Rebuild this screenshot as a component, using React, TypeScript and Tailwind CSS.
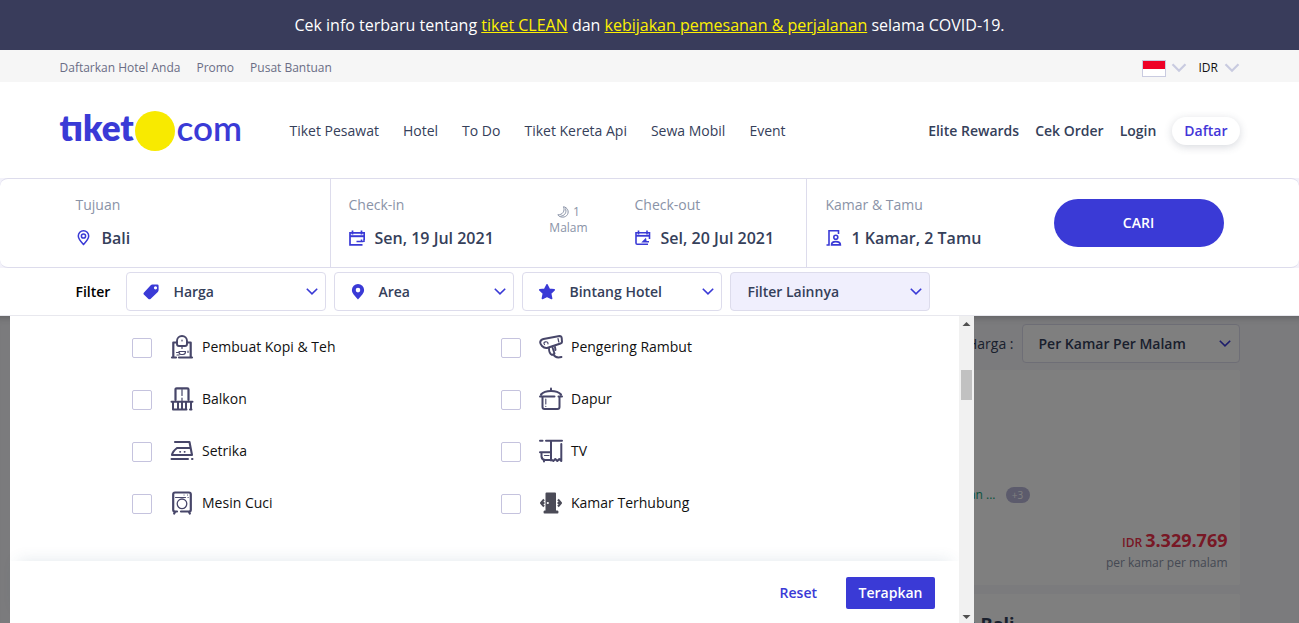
import React, { useState } from "react";

type IconProps = { className?: string };

const Chevron = ({ className }: IconProps) => (
  <svg viewBox="0 0 12 8" className={className} fill="none" stroke="currentColor" strokeWidth="1.6" aria-hidden="true">
    <path d="M0.800 0.800 6 5.900 11.200 0.800" />
  </svg>
);

const WideChevron = () => (
  <svg viewBox="0 0 16 10" className="h-[10px] w-4 shrink-0 text-[#c9cbe0]" fill="none" stroke="currentColor" strokeWidth="2.200" aria-hidden="true">
    <path d="M1.500 1.200 8 7.800 14.500 1.200" />
  </svg>
);

const PinOutline = () => (
  <svg viewBox="0 0 16 16" className="size-4 shrink-0" fill="none" stroke="currentColor" strokeWidth="1.500" aria-hidden="true">
    <path d="M7.500 14.500C5 11.800 2.300 9 2.300 6a5.200 5.200 0 0 1 10.400 0C12.700 9 10 11.800 7.500 14.500Z" />
    <circle cx="7.500" cy="6" r="2.100" />
  </svg>
);

const CalendarIn = () => (
  <svg viewBox="0 0 16 16" className="size-4 shrink-0" fill="none" stroke="currentColor" strokeWidth="1.700" aria-hidden="true">
    <path d="M13.500 14.800H1V2.800h14.200V10M3.500 0.600v3.800M12.500 0.600v3.800" />
    <path d="M1 6.200h14" strokeWidth="2" />
    <path d="M7.500 11.600h6.800M12.500 9.600V12M15 9.500v2.500" strokeWidth="1.500" />
  </svg>
);

const CalendarOut = () => (
  <svg viewBox="0 0 16 16" className="size-4 shrink-0" fill="none" stroke="currentColor" strokeWidth="1.600" aria-hidden="true">
    <path d="M13 14.300H2.200Q1 14.300 1 13V2.800h13.500V9M3.500 0.600v3.800M12 0.600v3.800" />
    <path d="M1 5.800h13.500" strokeWidth="1.800" />
    <path d="M14 11.800H8M10.500 9.200 8 11.800h3z" strokeWidth="1.500" />
  </svg>
);

const RoomGuest = () => (
  <svg viewBox="0 0 16 16" className="size-4 shrink-0" fill="none" stroke="currentColor" strokeWidth="1.600" aria-hidden="true">
    <path d="M0.500 15h2.500V0.800h9.500V4" />
    <circle cx="9.800" cy="7.300" r="2" />
    <path d="M5.500 14.900c0-2.400 1.600-3.300 4.200-3.300s4.700 0.900 4.700 3.300z" />
  </svg>
);

const Moon = () => (
  <svg viewBox="0 0 12 12" className="size-3 shrink-0" fill="none" stroke="currentColor" strokeWidth="1" aria-hidden="true">
    <path d="M6.500 0.700C8.300 5 5.500 9 0.800 8.800 3 12 8.500 12 10.500 8.500 12.200 5.200 10.500 1.500 6.500 0.700Z" />
    <path d="M8.500 2.500c1.500 4-1 7.500-5 7.700" />
  </svg>
);

const Tag = () => (
  <svg viewBox="0 0 16 16" className="size-4 shrink-0" fill="currentColor" aria-hidden="true">
    <path fillRule="evenodd" d="M9.300 0.500H14.300Q15.600 0.500 15.600 1.800V6Q15.600 7.200 14.800 8L7.500 14.900Q6.300 15.700 5.200 14.700L0.800 10.600Q0 9.600 0.800 8.700L7.700 1.300Q8.400 0.500 9.300 0.500ZM12.500 2.200a1.600 1.600 0 1 0 0 3.200a1.600 1.600 0 1 0 0-3.200Z" />
  </svg>
);

const PinSolid = () => (
  <svg viewBox="0 0 16 16" className="size-4 shrink-0" fill="currentColor" aria-hidden="true">
    <path fillRule="evenodd" d="M8 0a6.100 6.100 0 0 1 6.100 6.100C14.100 9.500 11 12.200 8 15.500 5 12.200 1.900 9.500 1.900 6.100A6.100 6.100 0 0 1 8 0ZM8 3.800a2.300 2.300 0 1 0 0 4.600A2.300 2.300 0 1 0 8 3.800Z" />
  </svg>
);

const Star = () => (
  <svg viewBox="0 0 16 16" className="size-4 shrink-0" fill="currentColor" stroke="currentColor" strokeWidth="1.600" strokeLinejoin="round" aria-hidden="true">
    <path d="M8 0.800 10.200 5.200 15.200 5.900 11.600 9.300 12.600 14.500 8 12.200 3.400 14.500 4.400 9.300 0.800 5.900 5.800 5.200Z" />
  </svg>
);

const Facility = ({ children }: { children: React.ReactNode }) => (
  <svg viewBox="0 0 24 24" className="size-6 shrink-0" fill="none" stroke="#474669" strokeWidth="2" strokeLinecap="round" strokeLinejoin="round" aria-hidden="true">
    {children}
  </svg>
);

const facilities = [
  {
    name: "Pembuat Kopi & Teh",
    icon: (
      <Facility>
        <path d="M2 22.500h4M9 22.500h13M3.300 22V7.500h3.500M20.700 22V7.500h-3.500" strokeWidth="2.200" />
        <path d="M7 9V6a5 5 0 0 1 10 0V9q0 2-2 2H9Q7 11 7 9Z" strokeWidth="1.900" />
        <path d="M12 5v1M12 11.500v2" strokeWidth="1.200" />
        <path d="M9 16.500h6.500q0 3-2.500 3h-2q-2 0-2-3ZM9 17.500H6.500M18 16v1.500M7 20h2" strokeWidth="1.200" />
      </Facility>
    ),
  },
  {
    name: "Pengering Rambut",
    icon: (
      <Facility>
        <path d="M4.500 4 20.500 1Q22.500 1 22.700 3L23 7Q23 8 21.500 8.500L8 13Q5.500 13.500 3 11 1 9 1.200 7 1.800 4.500 4.500 4Z" strokeWidth="2" />
        <path d="M19 3.500l0.800 3.500M5.500 9.500q-1.500-2 1-2.700 2.500-0.300 2.500 2" strokeWidth="1.200" />
        <path d="M10 13.500c0 3 1 5.500 3 6.500l2.500-1.500L13.500 12.500M16 12l0.500 3M14.500 19.500c1.200 2.500 3 3.800 8 2.500" strokeWidth="1.900" />
      </Facility>
    ),
  },
  {
    name: "Balkon",
    icon: (
      <Facility>
        <path d="M5.500 13V2.500Q5.500 1.300 6.700 1.300h10.600Q18.500 1.300 18.500 2.500V13" strokeWidth="2.200" />
        <path d="M12 2.500v6M12 11v2.500" strokeWidth="1.200" />
        <path d="M1.500 14.800h21M3 15v7M8 15v7M12 15v7M16 15v7M21 15v7M3 22.500h13.500M20 22.500h1.500" strokeWidth="2" />
      </Facility>
    ),
  },
  {
    name: "Dapur",
    icon: (
      <Facility>
        <path d="M1 9.500h14.500M19.500 9.500H23M3.500 10v10Q3.500 22 5.500 22h13q2 0 2-2V10M2 7.500Q5 4 12 4t10 3.500" strokeWidth="2" />
        <path d="M12 1.500V4" strokeWidth="2" />
        <path d="M6.800 12v5M6.800 19.300v0.200" strokeWidth="1.100" />
      </Facility>
    ),
  },
  {
    name: "Setrika",
    icon: (
      <Facility>
        <path d="M5 3h14.500l2.500 13H2q0.500-3.500 5-7h13" strokeWidth="2.100" />
        <path d="M10 12.800h0.300M14.500 12.800h0.300" strokeWidth="1.700" />
        <path d="M1.500 20h16.500M22 20h0.500" strokeWidth="2" />
      </Facility>
    ),
  },
  {
    name: "TV",
    icon: (
      <Facility>
        <path d="M1 1.800h2.500M7 1.800H23M12 2.500V21.500M22.300 5v17l-2-2-2 2-2-2-2 2-2-1.500" strokeWidth="2" />
        <path d="M1 13.300h10.500M2.500 14v3.500Q3 21 6 21h6M5 21.500v1" strokeWidth="2" />
        <path d="M5.500 16.500h4.500" strokeWidth="1.200" />
      </Facility>
    ),
  },
  {
    name: "Mesin Cuci",
    icon: (
      <Facility>
        <path d="M7 20.500H5q-1.800 0-1.800-1.800V3.300Q3.200 1.500 5 1.500h14q1.800 0 1.800 1.800v15.400q0 1.800-1.800 1.800H11M5 21l-0.800 1.500M19 21l0.800 1.500" strokeWidth="2.200" />
        <circle cx="12" cy="12.800" r="4.800" strokeWidth="1.300" />
        <path d="M5.500 6.500h10M14 4h0.100M17.500 4h0.100M18 6.500h0.200" strokeWidth="1.100" />
      </Facility>
    ),
  },
  {
    name: "Kamar Terhubung",
    icon: (
      <Facility>
        <g stroke="none" fill="#4b4b57">
          <path d="M6.500 2.500Q6.500 1.500 7.500 1.500h8.500q1 0 1 1V19.500h1.500q1 0 1 1.500t-1 1.500H5.500q-1 0-1-1.500t1-1.500h1Z" />
          <circle cx="8.800" cy="12" r="1.100" fill="#fff" />
        </g>
        <path d="M5.500 12H2.500M5 8.500 2 12l3 3.500M18.500 12h3M19 8.500 22 12l-3 3.500" stroke="#4b4b57" strokeWidth="2" strokeLinecap="butt" />
      </Facility>
    ),
  },
];

const Logo = () => (
  <a href="#" className="flex h-10 items-center font-['Lato',sans-serif] text-[35px] leading-10 text-[#3a3ad6]">
    <span className="w-[75px] pb-2 font-extrabold">tıket</span>
    <span className="size-10 shrink-0 rounded-full bg-[#f8ea00]" />
    <span className="w-[68px] pb-2 pl-[2px] font-semibold">com</span>
  </a>
);

function TopArea() {
  const [currency, setCurrency] = useState("IDR");
  return (
    <header className="shrink-0">
      <p className="bg-[#393c5b] px-4 py-[13px] text-center text-base leading-6 text-white">
        Cek info terbaru tentang{" "}
        <a href="#" className="text-[#fdf002] underline">tiket CLEAN</a> dan{" "}
        <a href="#" className="text-[#fdf002] underline">kebijakan pemesanan &amp; perjalanan</a> selama COVID-19.
      </p>
      <div className="bg-[#f6f6f6]">
        <div className="mx-auto flex h-8 max-w-[1180px] items-center justify-between pt-1 text-xs">
          <nav className="flex gap-4 text-[#6a6d85]">
            <a href="#">Daftarkan Hotel Anda</a>
            <a href="#">Promo</a>
            <a href="#">Pusat Bantuan</a>
          </nav>
          <div className="flex items-center gap-3">
            <button aria-label="Bahasa Indonesia" className="flex items-center gap-[5px]">
              <span className="h-[17px] w-6 border border-[#c9cbe0] bg-white">
                <span className="block h-2 bg-[#ee0128]" />
              </span>
              <WideChevron />
            </button>
            <label className="flex items-center gap-1">
              <select
                aria-label="Mata uang"
                value={currency}
                onChange={(e) => setCurrency(e.target.value)}
                className="w-[21px] appearance-none bg-transparent text-[#111]"
              >
                <option>IDR</option>
                <option>USD</option>
              </select>
              <WideChevron />
            </label>
          </div>
        </div>
      </div>
      <div className="mx-auto flex h-24 max-w-[1180px] items-center justify-between pt-[2px] text-sm text-[#35405a]">
        <div className="flex items-center gap-[47px]">
          <Logo />
          <nav className="flex gap-6">
            <a href="#">Tiket Pesawat</a>
            <a href="#">Hotel</a>
            <a href="#">To Do</a>
            <a href="#">Tiket Kereta Api</a>
            <a href="#">Sewa Mobil</a>
            <a href="#">Event</a>
          </nav>
        </div>
        <nav className="flex items-center gap-4 font-semibold">
          <a href="#">Elite Rewards</a>
          <a href="#">Cek Order</a>
          <a href="#">Login</a>
          <a href="#" className="rounded-full bg-white px-3 py-1 text-[#4335d8] shadow-[0_2px_8px_rgba(53,64,90,0.2)]">Daftar</a>
        </nav>
      </div>
    </header>
  );
}

const fieldLabel = "block text-sm leading-5 text-[#8a93a7]";
const fieldValue = "mt-[11px] flex items-center gap-[10px] text-base leading-6 font-semibold text-[#35405a]";

function SearchBar() {
  const [city, setCity] = useState("Bali");
  return (
    <form className="shrink-0 bg-[#f3f2fa]" onSubmit={(e) => e.preventDefault()}>
      <div className="rounded-lg border-t border-b border-[#dddcec] bg-white">
        <div className="mx-auto flex h-[88px] max-w-[1180px]">
          <div className="w-[271px] border-r border-[#dddcec] px-4 pt-4">
            <label htmlFor="city" className={fieldLabel}>Tujuan</label>
            <div className={fieldValue}>
              <span className="text-[#3a3ad6]"><PinOutline /></span>
              <input id="city" value={city} onChange={(e) => setCity(e.target.value)} className="min-w-0 flex-1 bg-transparent outline-none" />
            </div>
          </div>
          <div className="flex w-[476px] border-r border-[#dddcec] pl-[18px]">
            <div className="w-[200px] pt-4">
              <span className={fieldLabel}>Check-in</span>
              <button type="button" className={fieldValue}>
                <span className="text-[#3a3ad6]"><CalendarIn /></span>Sen, 19 Jul 2021
              </button>
            </div>
            <div className="flex w-[40px] flex-col items-center pt-[25px] text-xs leading-4 text-[#8a93a7]">
              <span className="flex items-center gap-1"><Moon />1</span>
              <span>Malam</span>
            </div>
            <div className="pt-4 pl-[46px]">
              <span className={fieldLabel}>Check-out</span>
              <button type="button" className={fieldValue}>
                <span className="text-[#3a3ad6]"><CalendarOut /></span>Sel, 20 Jul 2021
              </button>
            </div>
          </div>
          <div className="flex flex-1 items-center justify-between pr-4 pl-[19px]">
            <div className="self-start pt-4">
              <span className={fieldLabel}>Kamar &amp; Tamu</span>
              <button type="button" className={fieldValue}>
                <span className="text-[#3a3ad6]"><RoomGuest /></span>1 Kamar, 2 Tamu
              </button>
            </div>
            <button type="submit" className="h-12 w-[170px] rounded-full bg-[#3a3ad6] text-sm font-semibold text-white">CARI</button>
          </div>
        </div>
      </div>
    </form>
  );
}

const filterButton = "flex h-[39px] items-center rounded border border-[#dddcec] pr-[7px] pl-4 text-[#35405a]";
const filterChevron = "ml-auto h-2 w-3 text-[#3a3ad6]";

function FilterBar({ open, onToggle }: { open: boolean; onToggle: () => void }) {
  return (
    <div className="shrink-0 border-b border-[#e8e8ee] bg-white">
      <div className="mx-auto flex h-[47px] max-w-[1180px] items-center gap-2 pl-4 text-sm font-semibold">
        <span className="mr-2 text-black">Filter</span>
        <button className={`${filterButton} w-[200px] gap-[14px]`}>
          <span className="text-[#3a3ad6]"><Tag /></span>Harga<Chevron className={filterChevron} />
        </button>
        <button className={`${filterButton} w-[180px] gap-3`}>
          <span className="-ml-px text-[#3a3ad6]"><PinSolid /></span>Area<Chevron className={filterChevron} />
        </button>
        <button className={`${filterButton} w-[200px] gap-[14px]`}>
          <span className="text-[#3a3ad6]"><Star /></span>Bintang Hotel<Chevron className={filterChevron} />
        </button>
        <button aria-expanded={open} onClick={onToggle} className={`${filterButton} w-[200px] bg-[#f0effd]`}>
          Filter Lainnya<Chevron className={filterChevron} />
        </button>
      </div>
    </div>
  );
}

function FilterPanel() {
  return (
    <section aria-label="Filter Lainnya" className="absolute inset-y-0 left-[10px] z-10 flex w-[964px] bg-white">
      <div className="flex flex-1 flex-col">
        <div className="min-h-0 flex-1 overflow-hidden">
          <ul className="grid grid-cols-2 gap-y-7 pt-[19px] pr-[89px] pl-[122px] text-sm text-[#111]">
            {facilities.map((f) => (
              <li key={f.name}>
                <label className="flex h-6 items-center">
                  <input type="checkbox" className="mt-[2px] mr-[18px] size-5 appearance-none rounded-xs border border-[#c5c3de] bg-white checked:bg-[#3a3ad6]" />
                  {f.icon}
                  <span className="ml-2">{f.name}</span>
                </label>
              </li>
            ))}
          </ul>
        </div>
        <div className="flex h-[62px] items-center justify-end gap-[29px] bg-white pt-[2px] pr-6 text-sm font-semibold shadow-[0_-8px_16px_-8px_rgba(53,90,120,0.14)]">
          <button className="text-[#3a3ad6]">Reset</button>
          <button className="h-8 w-[89px] rounded-xs bg-[#3a3ad6] text-white">Terapkan</button>
        </div>
      </div>
      <div className="flex w-[15px] flex-col items-center bg-[#f1f1f1]" aria-hidden="true">
        <svg viewBox="0 0 15 16" className="h-4 w-[15px]"><path d="M7.500 6 11.500 10H3.500Z" fill="#505050" /></svg>
        <span className="mt-[38px] h-[30px] w-[11px] bg-[#c1c1c1]" />
        <svg viewBox="0 0 15 16" className="mt-auto h-4 w-[15px]"><path d="M7.500 12 11.500 8H3.500Z" fill="#505050" /></svg>
      </div>
    </section>
  );
}

function Results() {
  const [mode, setMode] = useState("Per Kamar Per Malam");
  return (
    <div className="mx-auto max-w-[1180px] pt-2 text-sm text-[#35405a]">
      <div className="flex items-center justify-end gap-2">
        <label htmlFor="mode">Harga :</label>
        <div className="grid h-[39px] w-[218px] items-center">
          <select
            id="mode"
            value={mode}
            onChange={(e) => setMode(e.target.value)}
            className="col-start-1 row-start-1 h-full w-full appearance-none rounded border border-[#dddcec] bg-white pl-4 font-semibold"
          >
            <option>Per Kamar Per Malam</option>
          </select>
          <Chevron className="pointer-events-none col-start-1 row-start-1 mr-[9px] h-2 w-3 justify-self-end text-[#3a3ad6]" />
        </div>
      </div>
      <article className="mt-[7px] flex h-[215px] flex-col justify-end rounded-xs bg-white pr-3 pb-3 text-right">
        <div className="flex items-center justify-end gap-[10px] pr-[198px] text-xs text-[#12a67a]">
          dan ...
          <span className="w-6 rounded-full bg-[#b8b6d8] text-center text-[10px] leading-4 text-white">+3</span>
        </div>
        <p className="mt-[25px] flex items-baseline justify-end gap-[3px] text-lg leading-6 font-bold text-[#f0304a]">
          <span className="text-xs font-semibold">IDR</span>3.329.769
        </p>
        <p className="mt-px text-xs leading-5 text-[#8a93a7]">per kamar per malam</p>
      </article>
      <article className="mt-[9px] h-[215px] rounded-xs bg-white pt-[18px] pr-[225px] text-right">
        <h2 className="text-lg leading-6 font-bold">Villa Bali</h2>
      </article>
    </div>
  );
}

export default function App() {
  const [open, setOpen] = useState(true);
  return (
    <div className="flex h-screen flex-col overflow-hidden bg-white font-['Open_Sans','Noto_Sans',sans-serif]">
      <TopArea />
      <SearchBar />
      <FilterBar open={open} onToggle={() => setOpen(!open)} />
      <main className="relative min-h-0 flex-1 overflow-hidden bg-[#f6f6fa]">
        <Results />
        {open && <div className="absolute inset-0 bg-black/50 shadow-[inset_0_8px_8px_-8px_rgba(0,0,0,0.3)]" />}
        {open && <FilterPanel />}
      </main>
    </div>
  );
}
